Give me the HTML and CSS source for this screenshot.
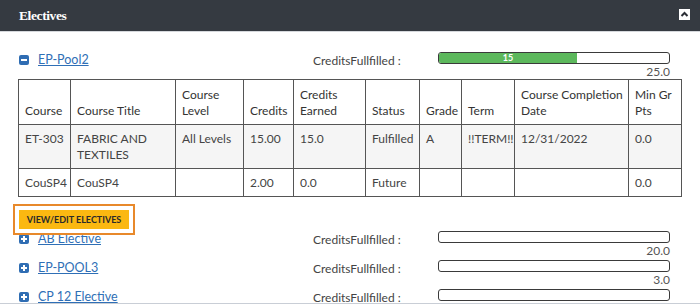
FILE: index.html
```html
<!doctype html>
<html lang="en">
<head>
  <meta charset="utf-8">
  <title>Electives</title>
  <link rel="stylesheet" href="styles.css">
</head>
<body>
  <div class="panel">
    <div class="panel-head">
      <h2>Electives</h2>
      <button class="collapse" type="button" aria-label="Collapse">
        <svg width="11" height="11" viewBox="0 0 11 11"><path d="M2.5 7 L5.5 4 L8.5 7" fill="none" stroke="#2b2f36" stroke-width="2"/></svg>
      </button>
    </div>

    <div class="panel-body">
      <div class="pool">
        <div class="pool-row">
          <a class="pool-name" href="#">
            <svg class="toggle" width="10" height="10" viewBox="0 0 10 10"><rect width="10" height="10" rx="2" fill="#2f6db3"/><rect x="2" y="4" width="6" height="2" fill="#fff"/></svg>
            EP-Pool2
          </a>
          <span class="label">CreditsFullfilled :</span>
          <div class="meter-wrap">
            <div class="meter"><div class="fill" style="width:60%">15</div></div>
            <div class="req">25.0</div>
          </div>
        </div>

        <table class="courses">
          <colgroup>
            <col class="c-course"><col class="c-title"><col class="c-level"><col class="c-credits"><col class="c-earned">
            <col class="c-status"><col class="c-grade"><col class="c-term"><col class="c-date"><col class="c-pts">
          </colgroup>
          <thead>
            <tr>
              <th>Course</th>
              <th>Course Title</th>
              <th>Course Level</th>
              <th>Credits</th>
              <th>Credits Earned</th>
              <th>Status</th>
              <th>Grade</th>
              <th>Term</th>
              <th class="wide">Course Completion<br>Date</th>
              <th>Min Gr Pts</th>
            </tr>
          </thead>
          <tbody>
            <tr class="shade">
              <td>ET-303</td>
              <td>FABRIC AND TEXTILES</td>
              <td>All Levels</td>
              <td>15.00</td>
              <td>15.0</td>
              <td>Fulfilled</td>
              <td>A</td>
              <td>!!TERM!!</td>
              <td>12/31/2022</td>
              <td>0.0</td>
            </tr>
            <tr>
              <td>CouSP4</td>
              <td>CouSP4</td>
              <td></td>
              <td>2.00</td>
              <td>0.0</td>
              <td>Future</td>
              <td></td>
              <td></td>
              <td></td>
              <td>0.0</td>
            </tr>
          </tbody>
        </table>

        <div class="actions">
          <button class="btn-edit" type="button">VIEW/EDIT ELECTIVES</button>
        </div>
      </div>

      <div class="pool-row">
        <a class="pool-name" href="#">
          <svg class="toggle" width="10" height="10" viewBox="0 0 10 10"><rect width="10" height="10" rx="2" fill="#2f6db3"/><rect x="2" y="4" width="6" height="2" fill="#fff"/><rect x="4" y="2" width="2" height="6" fill="#fff"/></svg>
          AB Elective
        </a>
        <span class="label">CreditsFullfilled :</span>
        <div class="meter-wrap">
          <div class="meter"></div>
          <div class="req">20.0</div>
        </div>
      </div>

      <div class="pool-row">
        <a class="pool-name" href="#">
          <svg class="toggle" width="10" height="10" viewBox="0 0 10 10"><rect width="10" height="10" rx="2" fill="#2f6db3"/><rect x="2" y="4" width="6" height="2" fill="#fff"/><rect x="4" y="2" width="2" height="6" fill="#fff"/></svg>
          EP-POOL3
        </a>
        <span class="label">CreditsFullfilled :</span>
        <div class="meter-wrap">
          <div class="meter"></div>
          <div class="req">3.0</div>
        </div>
      </div>

      <div class="pool-row">
        <a class="pool-name" href="#">
          <svg class="toggle" width="10" height="10" viewBox="0 0 10 10"><rect width="10" height="10" rx="2" fill="#2f6db3"/><rect x="2" y="4" width="6" height="2" fill="#fff"/><rect x="4" y="2" width="2" height="6" fill="#fff"/></svg>
          CP 12 Elective
        </a>
        <span class="label">CreditsFullfilled :</span>
        <div class="meter-wrap">
          <div class="meter"></div>
          <div class="req">10.0</div>
        </div>
      </div>
    </div>
  </div>
</body>
</html>
```

FILE: styles.css
```css
body {
  margin: 0;
  font-family: Lato, "Open Sans", sans-serif;
  font-size: 12px;
  color: #444;
  background-color: #fff;
}
.panel {
  height: 303px;
  overflow: hidden;
  border-bottom: 1px solid #c9ced6;
}
.panel-head {
  display: flex;
  align-items: center;
  justify-content: space-between;
  height: 31px;
  padding: 0 10px 0 19px;
  background-color: #353a41;
  border-bottom: 1px solid #d5d8dc;
}
.panel-head h2 {
  margin: 0;
  font-family: "Liberation Serif", serif;
  font-size: 13.5px;
  font-weight: bold;
  color: #fff;
  letter-spacing: -0.4px;
}
.collapse {
  display: flex;
  align-items: center;
  justify-content: center;
  width: 11px;
  height: 11px;
  padding: 0;
  margin-top: -3px;
  border: none;
  background-color: #fff;
}
.panel-body {
  padding: 20px 0 0 19px;
}
.pool-row {
  display: grid;
  grid-template-columns: 294px 125px 232px;
  align-items: start;
  margin-bottom: 2px;
}
.pool .pool-row {
  margin-bottom: 0;
}
.pool-name {
  display: flex;
  align-items: center;
  gap: 9px;
  line-height: 16px;
  font-size: 12.5px;
  color: #2f6fb6;
  text-decoration: underline;
}
.pool-name .toggle {
  flex: none;
}
.label {
  line-height: 17px;
  color: #444;
}
.meter {
  height: 10px;
  border: 1px solid #3a3a3a;
  border-radius: 3px;
  overflow: hidden;
  background-color: #fff;
}
.fill {
  height: 100%;
  background-color: #5cb85c;
  color: #fff;
  font-size: 9px;
  font-weight: bold;
  line-height: 10px;
  text-align: center;
}
.req {
  text-align: right;
  line-height: 15px;
  color: #555;
}
.courses {
  width: 663px;
  margin-left: -1px;
  border-collapse: collapse;
  table-layout: fixed;
}
.courses th,
.courses td {
  border: 1px solid #555;
  padding: 6px 6px 5px;
  line-height: 16px;
  text-align: left;
  vertical-align: top;
}
.courses th {
  font-weight: normal;
  color: #333;
  vertical-align: bottom;
  padding: 7px 6px 5px;
}
.courses th.wide {
  padding-right: 2px;
}
.courses .shade td {
  background-color: #f5f5f5;
}
.c-course { width: 52px; }
.c-title { width: 105px; }
.c-level { width: 68px; }
.c-credits { width: 50px; }
.c-earned { width: 72px; }
.c-status { width: 54px; }
.c-grade { width: 42px; }
.c-term { width: 53px; }
.c-date { width: 114px; }
.c-pts { width: 53px; }
.actions {
  padding: 13px 0 2px;
}
.btn-edit {
  display: block;
  width: 110px;
  height: 19px;
  padding: 0;
  border: none;
  background-color: #fbb811;
  color: #2a2a2a;
  font-family: Lato, sans-serif;
  font-size: 9px;
  font-weight: bold;
  outline: 2px solid #e8892b;
  outline-offset: 4px;
}
```
